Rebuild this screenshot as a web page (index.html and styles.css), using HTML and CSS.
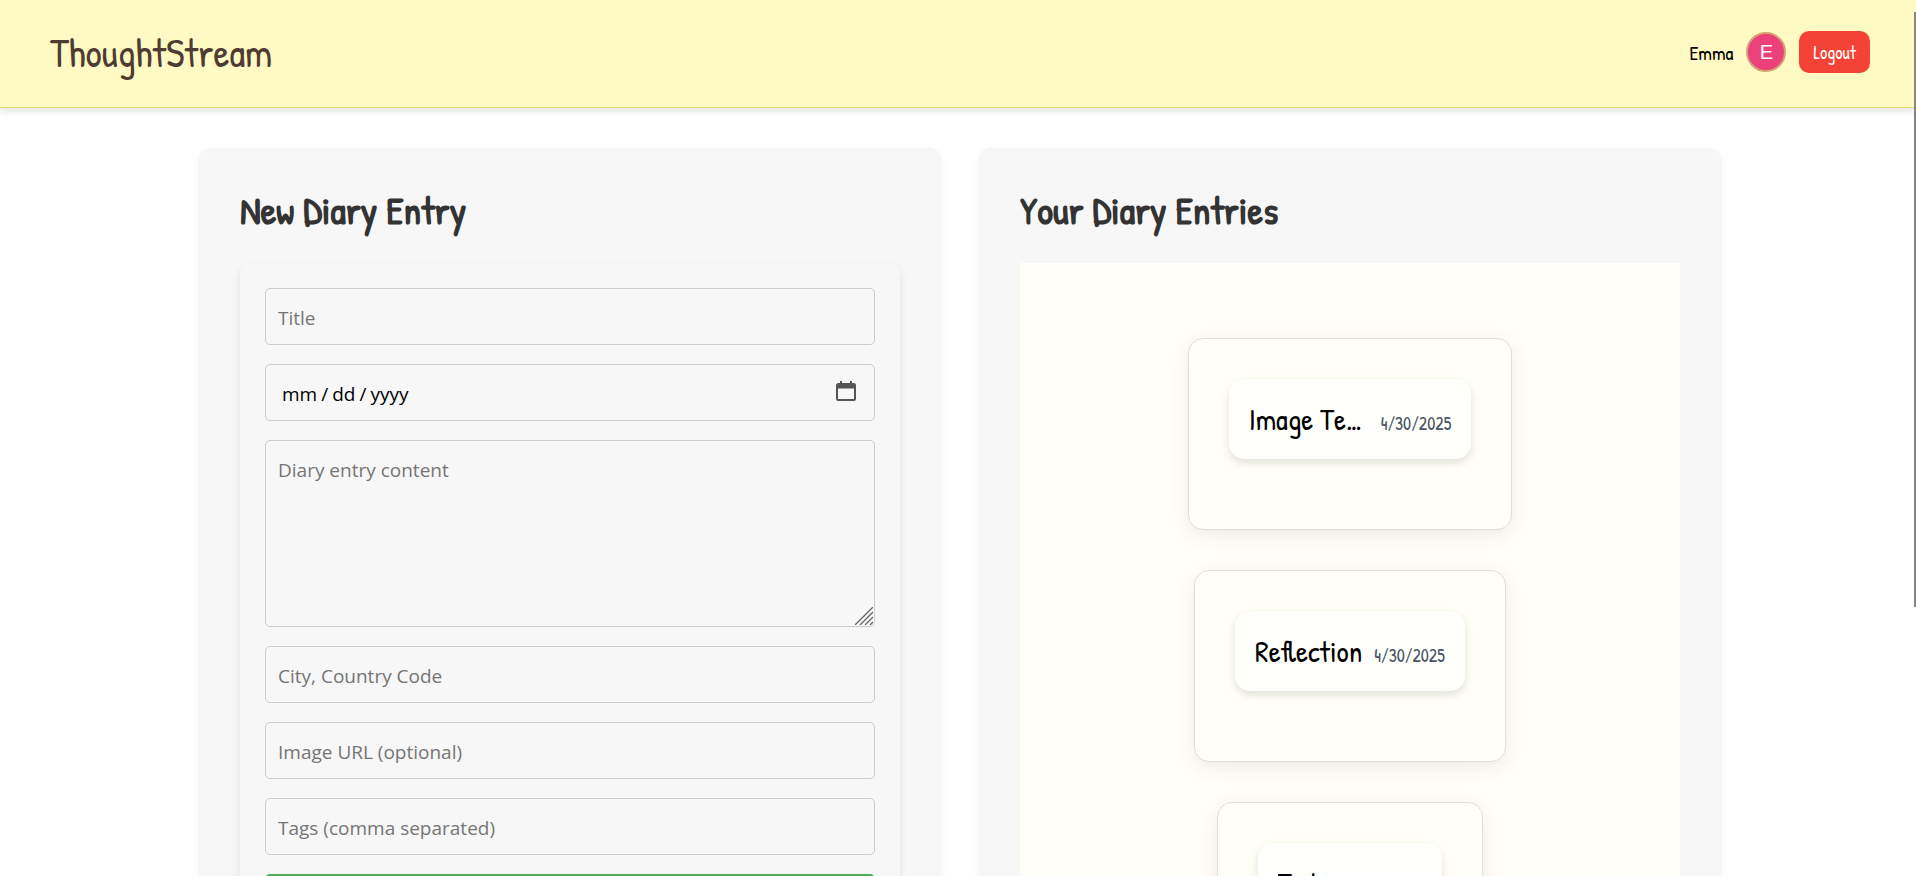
FILE: index.html
```html
<!DOCTYPE html>
<html lang="en">
<head>
<meta charset="utf-8">
<title>ThoughtStream</title>
<link rel="stylesheet" href="styles.css">
</head>
<body>
<header class="navbar">
  <h1 class="brand">ThoughtStream</h1>
  <div class="user">
    <span class="user-name">Emma</span>
    <span class="avatar">E</span>
    <button class="logout" type="button">Logout</button>
  </div>
</header>
<main class="columns">
  <section class="panel">
    <h2 class="panel-title">New Diary Entry</h2>
    <form class="entry-form">
      <input class="field" type="text" placeholder="Title" aria-label="Title">
      <input class="field field-date" type="date" aria-label="Date">
      <textarea class="field field-content" placeholder="Diary entry content" aria-label="Diary entry content"></textarea>
      <input class="field" type="text" placeholder="City, Country Code" aria-label="City, Country Code">
      <input class="field" type="text" placeholder="Image URL (optional)" aria-label="Image URL (optional)">
      <input class="field" type="text" placeholder="Tags (comma separated)" aria-label="Tags (comma separated)">
      <button class="submit" type="submit" aria-label="Add Entry"></button>
    </form>
  </section>
  <section class="panel">
    <h2 class="panel-title">Your Diary Entries</h2>
    <div class="entry-list">
      <article class="entry">
        <div class="entry-head"><h3 class="entry-title">Image Testing</h3><time class="entry-date" datetime="2025-04-30">4/30/2025</time></div>
      </article>
      <article class="entry">
        <div class="entry-head"><h3 class="entry-title">Reflection</h3><time class="entry-date" datetime="2025-04-30">4/30/2025</time></div>
      </article>
      <article class="entry">
        <div class="entry-head"><h3 class="entry-title">Today</h3><time class="entry-date" datetime="2025-04-30">4/30/2025</time></div>
      </article>
    </div>
  </section>
</main>
<div class="scroll-thumb"></div>
</body>
</html>
```
FILE: styles.css
```css
* { box-sizing: border-box; }
html { height: 100%; overflow: hidden; }
body {
  height: 100%;
  margin: 0;
  overflow: hidden;
  background: #fff;
  color: #000;
  font-family: "Patrick Hand", "Liberation Sans Narrow", "Open Sans", sans-serif;
}
.navbar {
  display: flex;
  align-items: center;
  justify-content: space-between;
  padding: 26px 46px 29px 50px;
  background: #fff9c4;
  border-bottom: 1px solid #e6d96a;
  box-shadow: 0 2px 8px rgba(0, 0, 0, 0.15);
}
.brand {
  margin: 0;
  color: #4e3b31;
  font-size: 40px;
  font-weight: 400;
  line-height: 52px;
}
.user { display: flex; align-items: center; gap: 13px; }
.user-name { font-size: 20px; }
.avatar {
  display: grid;
  place-items: center;
  width: 40px;
  height: 40px;
  border: 2px solid #d4a373;
  border-radius: 50%;
  background: #ec407a;
  color: #fff;
  font: 20px "Liberation Sans", Arial, sans-serif;
}
.logout {
  padding: 1px 14px 0;
  border: 0;
  border-radius: 10px;
  background: #f44336;
  color: #fff;
  font-family: inherit;
  font-size: 18px;
  line-height: 41px;
}
.columns {
  display: grid;
  grid-template-columns: 1fr 1fr;
  gap: 38px;
  padding: 40px 195px 40px 199px;
}
.panel {
  padding: 39px 40px 40px;
  border: 1px solid #f5f5f5;
  border-radius: 12px;
  background: #f7f7f7;
  box-shadow: 0 4px 8px rgba(0, 0, 0, 0.05);
}
.panel-title {
  margin: 0 0 31px;
  color: #333;
  font-size: 39px;
  line-height: 44px;
}
.entry-form {
  display: flex;
  flex-direction: column;
  gap: 19px;
  padding: 25px;
  border-radius: 10px;
  box-shadow: 0 5px 10px rgba(0, 0, 0, 0.1);
}
.field {
  width: 100%;
  height: 57px;
  padding: 14px 12px 12px;
  border: 1px solid #ccc;
  border-radius: 5px;
  background: transparent;
  color: #000;
  font-family: "Segoe UI", "Open Sans", sans-serif;
  font-size: 19px;
}
.field::placeholder { color: #757575; }
.field-date { padding-left: 15px; }
.field-date::-webkit-datetime-edit-text { padding: 0 3px; }
.field-date::-webkit-calendar-picker-indicator {
  width: 20px;
  height: 20px;
  margin: 0 6px 5px 0;
  padding: 0;
  background: url("data:image/svg+xml,%3Csvg xmlns='http://www.w3.org/2000/svg' viewBox='0 0 20 20'%3E%3Cpath fill='%23555' fill-rule='evenodd' d='M4 0h2v2h8V0h2v2h1.500a2.500 2.500 0 0 1 2.500 2.500V18a2 2 0 0 1-2 2H2a2 2 0 0 1-2-2V4.500A2.500 2.500 0 0 1 2.500 2H4zM2 7.500V17.500q0 .5.5.5h15q.5 0 .5-.5V7.500z'/%3E%3C/svg%3E") center / 20px 20px no-repeat;
}
.field-content {
  height: 187px;
  padding: 16px 12px;
  resize: vertical;
  background: url("data:image/svg+xml,%3Csvg xmlns='http://www.w3.org/2000/svg' viewBox='0 0 18 18'%3E%3Cpath stroke='%23666' stroke-width='1.300' d='M0 18 18 0M5 18 18 5M10 18l8-8M15 18l3-3'/%3E%3C/svg%3E") right 1px bottom 1px / 18px 18px no-repeat;
}
.field-content::-webkit-resizer { background: transparent; }
.submit {
  height: 57px;
  border: 0;
  border-radius: 5px;
  background: #4caf50;
}
.entry-list {
  display: flex;
  flex-direction: column;
  align-items: center;
  gap: 40px;
  padding: 75px 40px;
  background: #fffff7;
}
.entry {
  padding: 40px 40px 70px;
  border: 1px solid #ddd;
  border-radius: 15px;
  background: #fffff7;
  box-shadow: 0 5px 20px rgba(0, 0, 0, 0.08);
}
.entry-head {
  display: flex;
  align-items: baseline;
  gap: 12px;
  padding: 20px;
  border-radius: 15px;
  background: #fffffb;
  box-shadow: 0 4px 8px rgba(0, 0, 0, 0.12);
}
.entry-title {
  max-width: 120px;
  margin: 0;
  overflow: hidden;
  font-size: 30px;
  font-weight: 400;
  line-height: 40px;
  text-overflow: ellipsis;
  white-space: nowrap;
}
.entry-date { color: #4a5568; font-size: 18px; }
.scroll-thumb {
  position: fixed;
  top: 12px;
  right: 0;
  width: 2px;
  height: 595px;
  background: #858585;
}
```
